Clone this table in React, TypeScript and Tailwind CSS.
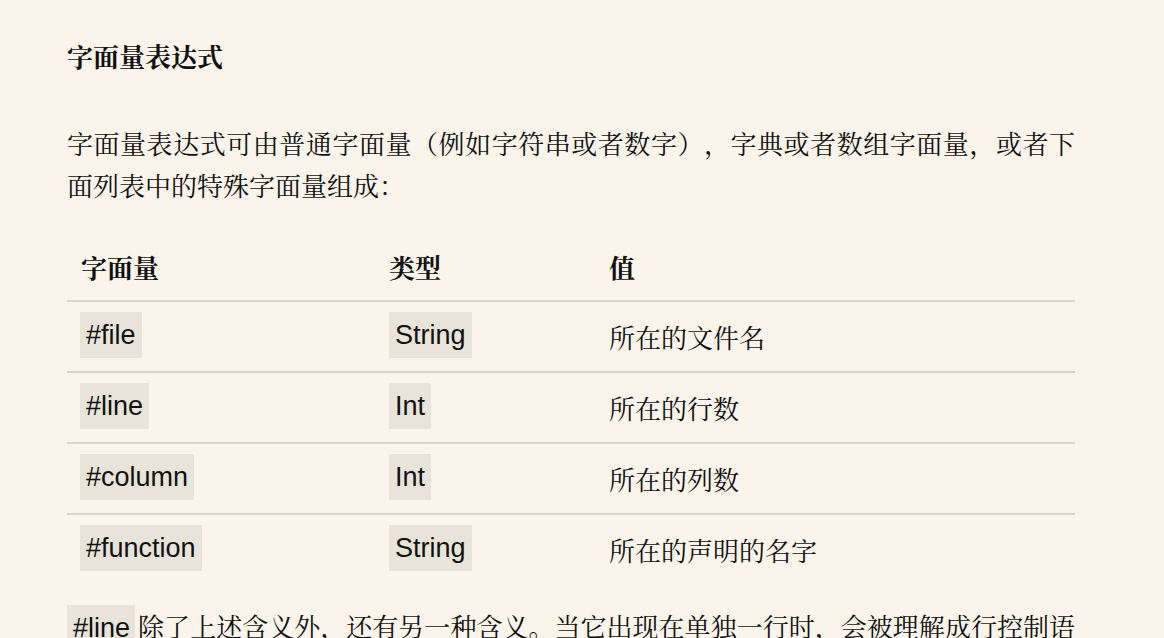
const rows = [
  { name: "#file", type: "String", value: "所在的文件名" },
  { name: "#line", type: "Int", value: "所在的行数" },
  { name: "#column", type: "Int", value: "所在的列数" },
  { name: "#function", type: "String", value: "所在的声明的名字" },
];

const Code = ({ children }: { children: string }) => (
  <span className="inline-block h-[46px] px-[6px] bg-[#e8e4da] font-['Liberation_Sans',Arial,sans-serif] text-[27px] leading-[46px]">
    {children}
  </span>
);

export default function App() {
  return (
    <div className="min-h-screen w-full bg-[#faf4eb] text-[#111] font-['Noto_Serif_CJK_SC','Noto_Sans_CJK_SC',serif] text-[26px] [text-spacing-trim:space-all]">
      <article className="ml-[67px] w-[1008px] pt-[34px] pb-10">
        <h2 className="text-[26px] font-bold leading-[43px]">字面量表达式</h2>

        <p className="mt-[45px] leading-[42px] text-justify">
          字面量表达式可由普通字面量（例如字符串或者数字），字典或者数组字面量，或者下面列表中的特殊字面量组成：
        </p>

        {/* Special literals table */}
        <div className="mt-[26px]">
          <div className="grid grid-cols-[309px_220px_479px] h-[70px] border-b-2 border-[#d9d4c9] font-bold">
            <div className="pl-[14px] flex items-center">字面量</div>
            <div className="pl-[13px] flex items-center">类型</div>
            <div className="pl-[13px] flex items-center">值</div>
          </div>
          {rows.map((r, i) => (
            <div
              key={r.name}
              className={
                i < rows.length - 1
                  ? "grid grid-cols-[309px_220px_479px] h-[71px] border-b-2 border-[#d9d4c9]"
                  : "grid grid-cols-[309px_220px_479px] h-[69px]"
              }
            >
              <div className="pl-[13px] pt-[10px]">
                <Code>{r.name}</Code>
              </div>
              <div className="pl-[13px] pt-[10px]">
                <Code>{r.type}</Code>
              </div>
              <div className="pl-[13px] flex items-center">{r.value}</div>
            </div>
          ))}
        </div>

        <p className="mt-[21px] leading-[42px] text-justify">
          <span className="mr-[3px] bg-[#e8e4da] pl-[6px] pr-[5px] py-[8px] font-['Liberation_Sans',Arial,sans-serif] text-[27px]">#line</span>
          除了上述含义外，还有另一种含义。当它出现在单独一行时，会被理解成行控制语句，用来修改当前的行号和文件名。
        </p>
      </article>
    </div>
  );
}
